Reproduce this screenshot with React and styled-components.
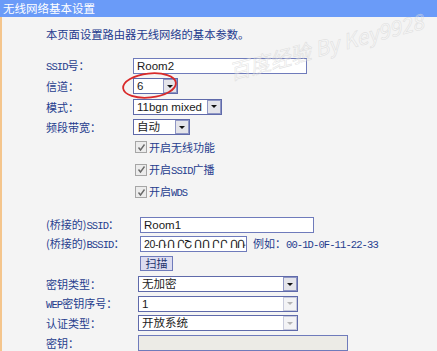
import React from "react";
import styled, { createGlobalStyle } from "styled-components";

const Global = createGlobalStyle`
  html, body { margin: 0; padding: 0; background: #f4f4f4; }
  body { font-family: "Noto Sans CJK SC", sans-serif; }
`;

const Page = styled.div`
  position: relative;
  width: 437px;
  height: 351px;
  overflow: hidden;
  background: #f4f4f4;
  display: flex;
  flex-direction: column;
`;

const TitleBar = styled.div`
  height: 17px;
  flex: none;
  background: #6a9bf8;
  color: #fff;
  font: 11.5px/17px "Noto Sans CJK SC", sans-serif;
  padding-left: 3px;
`;

const Body = styled.div`
  flex: 1;
  border-left: 2px solid #f4c58c;
  padding-left: 44px;
  display: flex;
  flex-direction: column;
`;

const Intro = styled.p`
  margin: 10px 0 0;
  font: 11.3px/14px "Noto Sans CJK SC", sans-serif;
  color: #233a8e;
`;

const Section = styled.div`
  display: flex;
  flex-direction: column;
  margin-top: ${(p) => p.$mt}px;
`;

const Row = styled.div`
  display: grid;
  grid-template-columns: ${(p) => p.$lw}px auto;
  align-items: center;
  height: ${(p) => p.$h}px;
`;

const Label = styled.span`
  font: 11px/14px "Noto Sans CJK SC", sans-serif;
  color: #263d8e;
  white-space: nowrap;
`;

const Ascii = styled.span`
  font-family: "Liberation Mono", monospace;
  font-size: 10.5px;
  letter-spacing: -0.9px;
`;

const Controls = styled.div`
  display: flex;
  align-items: center;
  gap: 6px;
`;

const TextBox = styled.div`
  box-sizing: border-box;
  width: ${(p) => p.$w}px;
  height: 16px;
  border: 1px solid #6f7bbb;
  background: ${(p) => (p.$disabled ? "#ecebe6" : "#fff")};
  font: 11.5px/14px "Liberation Sans", "Noto Sans CJK SC", sans-serif;
  color: #1a1a1a;
  padding-left: 3px;
  white-space: nowrap;
  overflow: hidden;
`;

const Masked = styled.span`
  font-size: 10.5px;
  letter-spacing: -0.4px;
`;

const SelectBox = styled.div`
  box-sizing: border-box;
  width: ${(p) => p.$w}px;
  height: 16px;
  border: 1px solid #5f6aaa;
  background: #fff;
  display: flex;
  align-items: stretch;
`;

const SelectValue = styled.span`
  flex: 1;
  font: 11.5px/14px "Liberation Sans", "Noto Sans CJK SC", sans-serif;
  color: #1a1a1a;
  padding-left: 3px;
  white-space: nowrap;
  overflow: hidden;
`;

const ArrowBtn = styled.span`
  box-sizing: border-box;
  width: 14px;
  border: 1px solid ${(p) => (p.$disabled ? "#c8cbdc" : "#8f96c4")};
  background: ${(p) => (p.$disabled ? "#f3f3f5" : "#e4e4ea")};
  display: flex;
  align-items: center;
  justify-content: center;
  &::after {
    content: "";
    border-left: 3px solid transparent;
    border-right: 3px solid transparent;
    border-top: 3px solid ${(p) => (p.$disabled ? "#b4b4b4" : "#111")};
  }
`;

const Check = styled.span`
  box-sizing: border-box;
  width: 12px;
  height: 12px;
  border: 1px solid #a6a6a6;
  background: #ececec;
  display: flex;
  align-items: center;
  justify-content: center;
  margin-left: 2px;
`;

const CheckLine = styled.div`
  display: flex;
  align-items: center;
  gap: 2px;
`;

const Button = styled.span`
  box-sizing: border-box;
  width: 33px;
  height: 15px;
  border: 1px solid #6f7bbb;
  background: #dcdcf0;
  color: #22336e;
  font: 11px/13px "Noto Sans CJK SC", sans-serif;
  text-align: center;
`;

const Example = styled.span`
  font: 11px/14px "Noto Sans CJK SC", sans-serif;
  color: #263d8e;
  white-space: nowrap;
`;

const Ellipse = styled.svg`
  position: absolute;
  left: 120px;
  top: 70px;
  pointer-events: none;
`;

const Watermark = styled.div`
  position: absolute;
  left: 226px;
  top: 60px;
  transform: rotate(-15deg);
  transform-origin: left top;
  font: italic 21px/24px "Noto Sans CJK SC", sans-serif;
  color: rgba(255, 255, 255, 0.2);
  -webkit-text-stroke: 0.6px rgba(210, 210, 210, 0.6);
  white-space: nowrap;
  pointer-events: none;
`;

const Select = ({ w, value, disabled }) => (
  <SelectBox $w={w}>
    <SelectValue>{value}</SelectValue>
    <ArrowBtn $disabled={disabled} />
  </SelectBox>
);

const CheckItem = ({ children }) => (
  <CheckLine>
    <Check>
      <svg width="9" height="9" viewBox="0 0 9 9">
        <path d="M1.5 4.5 L3.5 7 L7.5 1.5" stroke="#6a6a6a" strokeWidth="1.4" fill="none" />
      </svg>
    </Check>
    <Label>{children}</Label>
  </CheckLine>
);

export default function App() {
  return (
    <>
      <Global />
      <Page>
        <TitleBar>无线网络基本设置</TitleBar>
        <Body>
          <Intro>本页面设置路由器无线网络的基本参数。</Intro>

          <Section $mt={15}>
            <Row $lw={87} $h={20.3}>
              <Label><Ascii>SSID</Ascii>号：</Label>
              <TextBox $w={174}>Room2</TextBox>
            </Row>
            <Row $lw={87} $h={20.3}>
              <Label>信道：</Label>
              <Select w={45} value="6" />
            </Row>
            <Row $lw={87} $h={20.3}>
              <Label>模式：</Label>
              <Select w={89} value="11bgn mixed" />
            </Row>
            <Row $lw={87} $h={20.3}>
              <Label>频段带宽：</Label>
              <Select w={57} value="自动" />
            </Row>
          </Section>

          <Section $mt={-1}>
            <Row $lw={87} $h={22.5}>
              <span />
              <CheckItem>开启无线功能</CheckItem>
            </Row>
            <Row $lw={87} $h={22.5}>
              <span />
              <CheckItem>开启<Ascii>SSID</Ascii>广播</CheckItem>
            </Row>
            <Row $lw={87} $h={22.5}>
              <span />
              <CheckItem>开启<Ascii>WDS</Ascii></CheckItem>
            </Row>
          </Section>

          <Section $mt={11.5}>
            <Row $lw={94} $h={19.5}>
              <Label>(桥接的)<Ascii>SSID</Ascii>：</Label>
              <TextBox $w={174}>Room1</TextBox>
            </Row>
            <Row $lw={94} $h={19.5}>
              <Label>(桥接的)<Ascii>BSSID</Ascii>：</Label>
              <Controls>
                <TextBox $w={107}><Masked>20-ՌՈ ՐՇ ՈՈ ՐՐ ՈՌ</Masked></TextBox>
                <Example>例如：<Ascii>00-1D-0F-11-22-33</Ascii></Example>
              </Controls>
            </Row>
            <Row $lw={94} $h={19.5}>
              <span />
              <Button>扫描</Button>
            </Row>
          </Section>

          <Section $mt={1}>
            <Row $lw={92} $h={19.5}>
              <Label>密钥类型：</Label>
              <Select w={160} value="无加密" />
            </Row>
            <Row $lw={92} $h={19.5}>
              <Label><Ascii>WEP</Ascii>密钥序号：</Label>
              <Select w={160} value="1" disabled />
            </Row>
            <Row $lw={92} $h={19.5}>
              <Label>认证类型：</Label>
              <Select w={160} value="开放系统" disabled />
            </Row>
            <Row $lw={92} $h={19.5}>
              <Label>密钥：</Label>
              <TextBox $w={210} $disabled />
            </Row>
          </Section>
        </Body>

        <Watermark>百度经验 By Key9928</Watermark>
        <Ellipse width="60" height="32" viewBox="0 0 60 32">
          <ellipse cx="29.5" cy="15.5" rx="26.5" ry="12" transform="rotate(-6 29.5 15.5)" stroke="#d92a2a" strokeWidth="1.8" fill="none" />
        </Ellipse>
      </Page>
    </>
  );
}
